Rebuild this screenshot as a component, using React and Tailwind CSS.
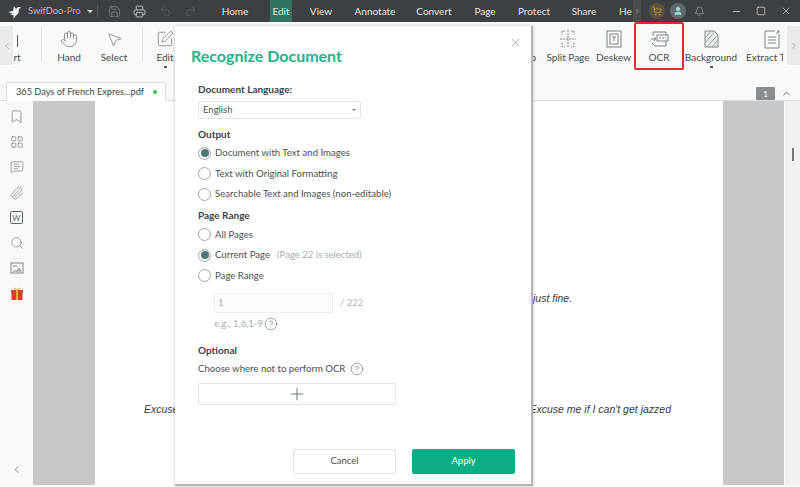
import React from 'react';
import { ChevronLeft, ChevronRight, ChevronUp, X, Minus, Square, Bell, Plus, Hand, MousePointer2, Bookmark, LayoutGrid, MessageSquareText, Paperclip, Search, Printer, Save, Undo2, Redo2, ShoppingCart, User, CircleHelp, SquarePen } from 'lucide-react';

const menus = [
    ['Home', 'w-[62px]'], ['Edit', 'w-[22px] ml-[4px] bg-[#2f7360]'], ['View', 'w-[58px]'], ['Annotate', 'w-[50px]'],
    ['Convert', 'w-[68px]'], ['Page', 'w-[34px]'], ['Protect', 'w-[64px]'], ['Share', 'w-[36px]'],
];

const ToolIcon = ({ children }) => (
    <svg width="22" height="22" viewBox="0 0 22 22" fill="none" stroke="#7b8387" strokeWidth="1">{children}</svg>
);

const Tool = ({ label, width, children, caret }) => (
    <div className={`relative flex flex-col items-center shrink-0 ${width}`}>
        <div className="h-[24px] flex items-center justify-center">{children}</div>
        <span className="-mt-[1px] text-[10px] leading-[14px] text-[#444b4f] whitespace-nowrap">{label}</span>
        {caret && <span className="mt-[2px] w-[3px] h-[2px] bg-[#555]"></span>}
    </div>
);

const Radio = ({ label, checked, note }) => (
    <div className="flex items-center h-[20.5px]">
        <span className="w-[13px] h-[13px] rounded-full border border-[#9fa8ad] flex items-center justify-center shrink-0">
            {checked && <span className="w-[8px] h-[8px] rounded-full bg-[#50777a]"></span>}
        </span>
        <span className="ml-[4px] text-[9.6px] text-[#4a5054] whitespace-nowrap">{label}</span>
        {note && <span className="ml-[7px] text-[9.5px] text-[#a6acaf] whitespace-nowrap">{note}</span>}
    </div>
);

const SideIcon = ({ children }) => (
    <div className="h-[25.3px] flex items-center justify-center text-[#5f6569]">{children}</div>
);

const Dialog = () => (
    <div className="absolute left-[175px] top-[26px] w-[358px] h-[460px] bg-white border-r-2 border-b-2 border-[#b4b4b4] shadow-[0_0_3px_rgba(0,0,0,0.25)] pl-[23px] pr-[18px] pt-[19px]">
        <X className="absolute right-[9px] top-[10px] text-[#5f666a]" size={13} strokeWidth={1} />
        <h1 className="-ml-[7px] text-[16px] leading-[22px] font-bold text-[#1fb38c]">Recognize Document</h1>
        <div className="mt-[16px] text-[10px] leading-[13px] font-bold text-[#3c4245]">Document Language:</div>
        <div className="mt-[5px] w-[163px] h-[18px] border border-[#e2e4e5] rounded-[2px] flex items-center justify-between pl-[4px] pr-[4px] text-[9.5px] text-[#4a5054]">
            <span>English</span>
            <span className="w-0 h-0 border-x-[2px] border-x-transparent border-t-[2px] border-t-[#777]"></span>
        </div>
        <div className="mt-[9px] text-[10px] leading-[13px] font-bold text-[#3c4245]">Output</div>
        <div className="mt-[2px]">
            <Radio label="Document with Text and Images" checked />
            <Radio label="Text with Original Formatting" />
            <Radio label="Searchable Text and Images (non-editable)" />
        </div>
        <div className="mt-[4px] text-[10px] leading-[13px] font-bold text-[#3c4245]">Page Range</div>
        <div className="mt-[3px]">
            <Radio label="All Pages" />
            <Radio label="Current Page" checked note="(Page 22 is selected)" />
            <Radio label="Page Range" />
        </div>
        <div className="mt-[7px] ml-[16px] flex items-center">
            <div className="w-[119px] h-[20px] border border-[#eeeeee] rounded-[2px] bg-[#fbfbfb] pl-[3px] flex items-center text-[9.5px] text-[#a6acaf]">1</div>
            <span className="ml-[7px] text-[9.5px] text-[#b5babc]">/ 222</span>
        </div>
        <div className="mt-[4px] ml-[16px] flex items-center text-[9.5px] text-[#a6acaf]">
            e.g., 1,6,1-9
            <CircleHelp className="ml-[1px] text-[#5f666a]" size={14} strokeWidth={1} />
        </div>
        <div className="mt-[13px] text-[10px] leading-[13px] font-bold text-[#3c4245]">Optional</div>
        <div className="mt-[5px] flex items-center text-[9.6px] text-[#4a5054]">
            Choose where not to perform OCR
            <CircleHelp className="ml-[5px] text-[#5f666a]" size={14} strokeWidth={1} />
        </div>
        <div className="mt-[6px] w-[198px] h-[22px] border border-[#e2e4e5] rounded-[2px] flex items-center justify-center">
            <Plus className="text-[#4f6068]" size={20} strokeWidth={1} />
        </div>
        <div className="absolute left-[118px] top-[423px] flex gap-[16px]">
            <button className="w-[103px] h-[25px] border border-[#dfe1e2] rounded-[2px] text-[9.5px] text-[#4a5054]">Cancel</button>
            <button className="w-[103px] h-[25px] rounded-[2px] bg-[#0cae85] text-[9.5px] text-white">Apply</button>
        </div>
    </div>
);

const App = () => {
    return (
        <div className="relative w-[800px] h-[487px] overflow-hidden bg-[#fafafa] font-['Lato',sans-serif]">
            {/* title bar */}
            <div className="h-[22px] bg-[#3d4043] flex items-center text-[10px] text-[#e4e6e7]">
                <svg className="ml-[7px] shrink-0" width="15" height="15" viewBox="0 0 15 15" fill="#f5f5f5">
                    <path d="M1 8 L6 7 L7 2 L9 5 L11 3 L14 3 L12 5 L11.5 9 L8.5 12 L6.5 15 L6.5 11 L3 11 L5.5 9.5Z" />
                </svg>
                <span className="ml-[6px] w-[52px] whitespace-nowrap text-[#b9bdbf] text-[9.3px]">SwifDoo<span className="text-[#e0a33c]">-Pro</span></span>
                <span className="ml-[7px] w-0 h-0 border-x-[3px] border-x-transparent border-t-[3px] border-t-[#ddd]"></span>
                <span className="ml-[4px] w-px h-[12px] bg-[#55595c]"></span>
                <Save className="ml-[10px] text-[#8b8f92]" size={13} strokeWidth={1.2} />
                <Printer className="ml-[12px] text-[#b9bcbe]" size={13} strokeWidth={1.8} />
                <Undo2 className="ml-[13px] text-[#66696c]" size={13} strokeWidth={1.2} />
                <Redo2 className="ml-[12px] text-[#66696c]" size={13} strokeWidth={1.2} />
                <div className="ml-[7px] flex items-stretch h-full">
                    {menus.map(([name, style]) => (
                        <div key={name} className={`flex items-center justify-center ${style}`}>{name}</div>
                    ))}
                </div>
                <span className="ml-[17px] w-[14px] overflow-hidden">He</span>
                <div className="w-[8px] h-full bg-[#4a4d50] flex items-center justify-center"><ChevronRight className="text-[#aaa]" size={9} /></div>
                <div className="ml-[8px] w-[16px] h-[16px] rounded-full bg-[#5b5140] flex items-center justify-center"><ShoppingCart className="text-[#d19a32]" size={10} /></div>
                <div className="ml-[5px] w-[16px] h-[16px] rounded-full bg-[#5d6b6e] flex items-center justify-center"><User className="text-[#a5e0d8]" fill="#a5e0d8" size={10} /></div>
                <Bell className="ml-[8px] text-[#c0c3c5]" size={11} strokeWidth={1.2} />
                <Minus className="ml-[26px] text-[#eee]" size={11} strokeWidth={1.5} />
                <Square className="ml-[14px] text-[#eee]" size={10} strokeWidth={1.5} />
                <X className="ml-[14px] text-[#eee]" size={12} strokeWidth={1.2} />
            </div>

            {/* ribbon */}
            <div className="relative h-[54px] bg-[#f9f9f9] flex items-start pt-[5px]">
                <div className="w-[13px] h-[39px] -mt-[1px] bg-[#eaeaea] flex items-center justify-center shrink-0"><ChevronLeft className="text-[#a4a4a4]" size={10} /></div>
                <Tool label="rt" width="w-[8px]"><span className="block w-px h-[12px] bg-[#555] mt-[3px]"></span></Tool>
                <span className="ml-[20px] w-px h-[34px] bg-[#e2e2e2]"></span>
                <Tool label="Hand" width="w-[54px]"><Hand className="text-[#6b7378]" size={18} strokeWidth={1} /></Tool>
                <Tool label="Select" width="w-[36px]"><MousePointer2 className="text-[#6b7378]" size={17} strokeWidth={1} /></Tool>
                <span className="ml-[10px] w-px h-[34px] bg-[#e2e2e2]"></span>
                <Tool label="Edit" width="w-[44px]" caret><SquarePen className="text-[#6b7378]" size={18} strokeWidth={1} /></Tool>
                <div className="ml-auto flex items-start">
                    <span className="text-[10px] leading-[14px] mt-[23px] mr-[7px] text-[#444b4f]">p</span>
                    <Tool label="Split Page" width="w-[50px]">
                        <ToolIcon><path d="M8 3H5v4M14 3h3v4M5 15v4h3M17 15v4h-3M11 2v18M3 11h16" strokeDasharray="2 1" /></ToolIcon>
                    </Tool>
                    <Tool label="Deskew" width="w-[41px]">
                        <ToolIcon><rect x="4" y="3" width="14" height="16" /><rect x="7" y="6" width="8" height="10" /><path d="M9 9h4M11 9v4" /></ToolIcon>
                    </Tool>
                    <div className="relative">
                        <div className="absolute left-0 -top-[5px] w-[50px] h-[48px] border-2 border-[#d9302a] rounded-[2px]"></div>
                        <Tool label="OCR" width="w-[50px]">
                            <ToolIcon><path d="M5 8V4h13v14H7l-3-3" /><rect x="9" y="7" width="11" height="6" fill="#f9f9f9" /><path d="M11 10h7" strokeDasharray="2 1" /><path d="M3 11h5M6 9l2 2-2 2" /></ToolIcon>
                        </Tool>
                    </div>
                    <Tool label="Background" width="w-[54px]" caret>
                        <ToolIcon><path d="M5 3h9l4 4v12H5Z" fill="#eceeee" /><path d="M5 10l6-7M5 15L14 4.5M7 19L17 7.5M12 19l6-7" stroke="#9aa2a5" /></ToolIcon>
                    </Tool>
                    <div className="w-[45px] pl-[9px] shrink-0 overflow-hidden">
                        <Tool label="Extract Text" width="w-[50px]">
                            <ToolIcon><path d="M14 3H4v17h14V6" /><path d="M7 9h8M7 12h8M7 15h8M15 6l3-3M16 3h2v2" /></ToolIcon>
                        </Tool>
                    </div>
                    <div className="w-[13px] h-[39px] -mt-[1px] ml-[4px] bg-[#eaeaea] flex items-center justify-center"><ChevronRight className="text-[#a4a4a4]" size={10} /></div>
                </div>
            </div>

            {/* tabs */}
            <div className="h-[25px] bg-[#f9f9f9] border-b border-[#dcdcdc] flex items-end pl-[6px]">
                <div className="w-[160px] h-[19px] -mb-px bg-white border border-[#dcdcdc] border-b-white rounded-t-[2px] flex items-center pl-[9px] text-[9.2px] text-[#3f4548] whitespace-nowrap">
                    365 Days of French Expres...pdf
                    <span className="ml-[9px] w-[4px] h-[4px] rounded-full bg-[#37c24a]"></span>
                </div>
                <div className="ml-auto flex items-center">
                    <span className="w-[19px] h-[13px] rounded-[1px] bg-[#8a8d8f] flex items-center justify-center text-[8px] text-white">1</span>
                    <ChevronUp className="ml-[6px] mr-[8px] text-[#555]" size={11} />
                </div>
            </div>

            {/* work area */}
            <div className="flex h-[384px]">
                <div className="w-[33px] bg-[#f9f9f9] pt-[3px] flex flex-col shrink-0">
                    <SideIcon><Bookmark size={15} strokeWidth={1} /></SideIcon>
                    <SideIcon><LayoutGrid size={14} strokeWidth={1} /></SideIcon>
                    <SideIcon><MessageSquareText size={14} strokeWidth={1} /></SideIcon>
                    <SideIcon><Paperclip size={14} strokeWidth={1} /></SideIcon>
                    <SideIcon>
                        <span className="w-[13px] h-[13px] border border-[#5f6569] rounded-[2px] flex items-center justify-center text-[8px] leading-none">W</span>
                    </SideIcon>
                    <SideIcon><Search size={14} strokeWidth={1} /></SideIcon>
                    <SideIcon>
                        <svg width="14" height="14" viewBox="0 0 14 14" fill="none" stroke="currentColor" strokeWidth="0.8"><rect x="1" y="2" width="12" height="10" /><path d="M3 5h4M3 10h8M7 10l2-3 2 3" /></svg>
                    </SideIcon>
                    <SideIcon>
                        <svg width="14" height="14" viewBox="0 0 14 14"><rect x="1.5" y="4" width="11" height="9" fill="#e0392b" /><rect x="1" y="3" width="12" height="3" fill="#d2452d" /><rect x="6" y="3" width="2" height="10" fill="#f2b233" /><path d="M7 3L4 1M7 3l3-2" stroke="#f2b233" strokeWidth="1.2" /></svg>
                    </SideIcon>
                    <div className="mt-auto mb-[10px] flex justify-center"><ChevronLeft className="text-[#777]" size={11} /></div>
                </div>
                <div className="w-[62px] bg-[#c8c8c8] shrink-0"></div>
                <div className="w-[628px] bg-white text-[10.5px] italic text-[#3a3a3a] font-['Liberation_Sans',sans-serif] shrink-0">
                    <div className="mt-[190px] pl-[438px]">just fine.</div>
                    <div className="mt-[95px] pl-[49px] flex justify-between pr-[52px]">
                        <span>Excuse</span>
                        <span>Excuse me if I can't get jazzed</span>
                    </div>
                </div>
                <div className="w-[61px] bg-[#c8c8c8] shrink-0"></div>
                <div className="flex-1 bg-[#f1f1f1] border-l border-white flex justify-center">
                    <span className="mt-[47px] w-[2px] h-[13px] bg-[#777]"></span>
                </div>
            </div>

            <Dialog />
        </div>
    );
};

export default App;
